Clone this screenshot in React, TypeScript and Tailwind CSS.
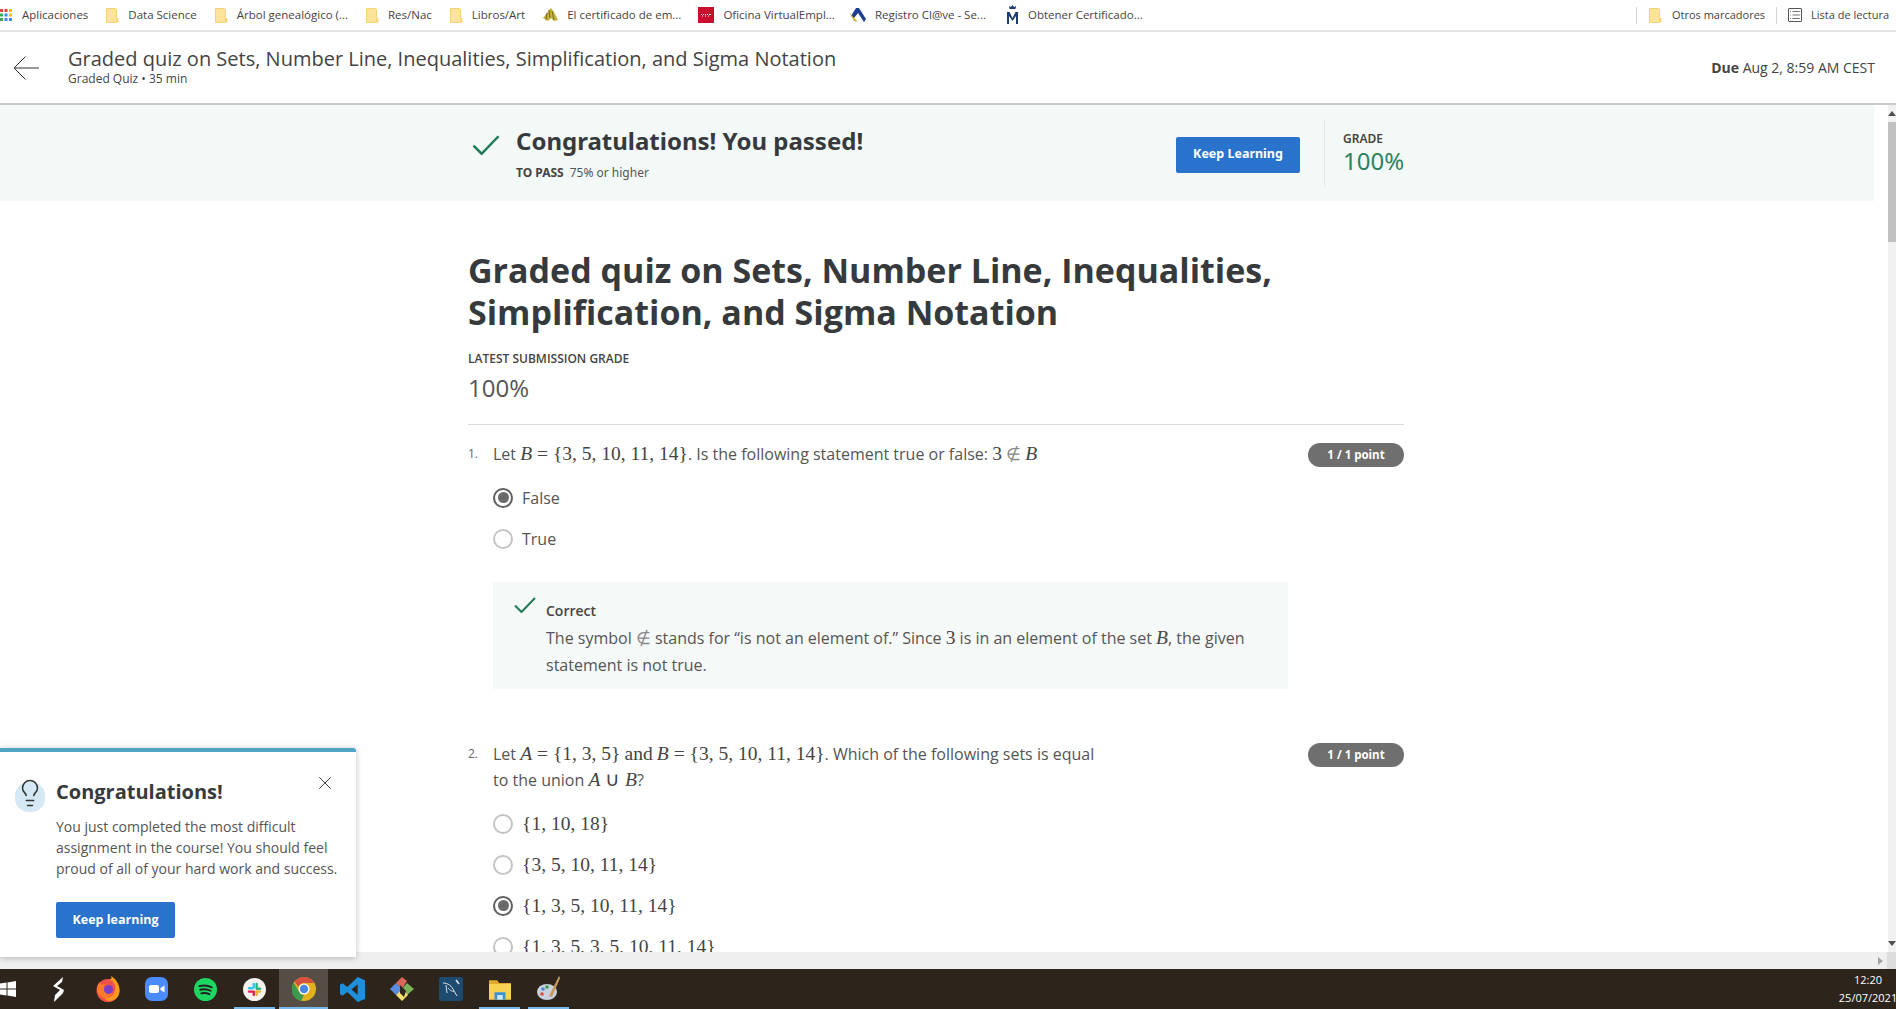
import type { ReactNode } from 'react';
import { Lightbulb, X, List } from 'lucide-react';

function M({ children }: { children: ReactNode }) {
  return <span className="font-['Liberation_Serif',serif] text-[19.500px] text-[#444]">{children}</span>;
}

function V({ children }: { children: ReactNode }) {
  return <i className="font-['Liberation_Serif',serif] text-[19.500px]">{children}</i>;
}

function NotIn() {
  return <span className="font-['Liberation_Serif',serif] text-[17px] text-[#8a8a8a]">∉</span>;
}

function Tick({ w, h, width }: { w: number; h: number; width: number }) {
  return (
    <svg width={w} height={h} viewBox="0 0 22 16" className="shrink-0 text-[#1f7a55]">
      <path d="M1 8.500 7.500 15 21 1" fill="none" stroke="currentColor" strokeWidth={width} />
    </svg>
  );
}

function Folder() {
  return (
    <svg width="13" height="15" viewBox="0 0 13 15" className="shrink-0">
      <path d="M.5.500h9l1 1v13h-10z" fill="#fde49a" stroke="#f3d27a" strokeWidth="1" />
      <path d="M10.500 10h2v4.500h-2z" fill="#f6d67e" />
    </svg>
  );
}

function Bookmark({ icon, label }: { icon: ReactNode; label: string }) {
  return (
    <div className="flex items-center gap-[9px]">
      {icon}
      <span className="text-[11.500px] text-[#444] whitespace-nowrap">{label}</span>
    </div>
  );
}

function BookmarksBar() {
  return (
    <div className="h-[32px] shrink-0 border-b-[2px] border-[#e2e4e6] flex items-center justify-between font-['Open_Sans',sans-serif] bg-white">
      <div className="flex items-center">
        <svg width="12" height="12" viewBox="0 0 12 12" className="shrink-0">
          <rect x="0" y="0" width="3" height="3" fill="#e8453c" />
          <rect x="4.500" y="0" width="3" height="3" fill="#e8453c" />
          <rect x="9" y="0" width="3" height="3" fill="#fbbc05" />
          <rect x="0" y="4.500" width="3" height="3" fill="#34a853" />
          <rect x="4.500" y="4.500" width="3" height="3" fill="#4285f4" />
          <rect x="9" y="4.500" width="3" height="3" fill="#fbbc05" />
          <rect x="0" y="9" width="3" height="3" fill="#34a853" />
          <rect x="4.500" y="9" width="3" height="3" fill="#4285f4" />
          <rect x="9" y="9" width="3" height="3" fill="#4285f4" />
        </svg>
        <div className="flex items-center gap-[18px] ml-[10px]">
          <span className="text-[11.500px] text-[#444]">Aplicaciones</span>
          <Bookmark icon={<Folder />} label="Data Science" />
          <Bookmark icon={<Folder />} label="Árbol genealógico (..." />
          <Bookmark icon={<Folder />} label="Res/Nac" />
          <Bookmark icon={<Folder />} label="Libros/Art" />
          <div className="flex items-center gap-[17px]">
            <Bookmark
              icon={
                <svg width="15" height="14" viewBox="0 0 15 14">
                  <path d="M0 10 6 2l2-2 3 4 4 8-4 1-3-3-3 3z" fill="#c9b13a" />
                  <path d="M6 2l1 8M9 3l2 9M4 5 3 12" stroke="#6b6b2c" strokeWidth="1" />
                </svg>
              }
              label="El certificado de em..."
            />
            <Bookmark
              icon={
                <svg width="16" height="16" viewBox="0 0 16 16">
                  <rect width="16" height="16" fill="#c8102e" />
                  <path d="M3 7.500h1M5 7.500h1M7 7.500h1M9 7.500h1M11 7.500h2M4 9h1M7 9h1M10 9h1" stroke="#fff" strokeWidth="1" />
                </svg>
              }
              label="Oficina VirtualEmpl..."
            />
            <div className="-ml-[3px]">
              <Bookmark
                icon={
                  <svg width="17" height="16" viewBox="0 0 17 16">
                    <path d="M2 9 7 1h3l7 11-2 3-6-9-4 5z" fill="#1c3f8f" />
                    <path d="M0 5l6 7 3 3-4-1z" fill="#d8a92f" />
                  </svg>
                }
                label="Registro Cl@ve - Se..."
              />
            </div>
            <div className="ml-[3px]">
              <Bookmark
                icon={
                  <svg width="13" height="20" viewBox="0 0 13 20">
                    <path d="M3.500 4 3 1l2 1 1.500-2L8 2l2-1-.5 3z" fill="#1f3c73" />
                    <path d="M1 19V7h2.500L6.500 13 9.500 7H12v12h-2v-8l-3.500 5L3 11v8z" fill="#1f3c73" />
                  </svg>
                }
                label="Obtener Certificado..."
              />
            </div>
          </div>
        </div>
      </div>
      <div className="flex items-center pr-[7px]">
        <div className="w-px h-[17px] bg-[#d5d5d5] mr-[12px]" />
        <div className="flex items-center gap-[10px]">
          <Folder />
          <span className="text-[11px] text-[#444] whitespace-nowrap">Otros marcadores</span>
        </div>
        <div className="w-px h-[17px] bg-[#d5d5d5] ml-[11px] mr-[11px]" />
        <div className="flex items-center gap-[9px]">
          <List size={14} strokeWidth={1.500} className="text-[#444] border border-[#555] rounded-[1px]" />
          <span className="text-[11px] text-[#444] whitespace-nowrap">Lista de lectura</span>
        </div>
      </div>
    </div>
  );
}

function QuizHeader() {
  return (
    <div className="h-[73px] shrink-0 border-b-[2px] border-[#c9c9c9] flex items-center justify-between bg-white pl-[13px] pr-[21px] font-['Open_Sans',sans-serif]">
      <div className="flex items-center gap-[29px]">
        <svg width="26" height="24" viewBox="0 0 26 24" className="text-[#333] shrink-0">
          <path d="M12.500 .500 1 12l11.500 11.500M1 12h25" fill="none" stroke="currentColor" strokeWidth="1" />
        </svg>
        <div className="-mt-[2px]">
          <div className="text-[20px] leading-[24px] text-[#444]">
            Graded quiz on Sets, Number Line, Inequalities, Simplification, and Sigma Notation
          </div>
          <div className="text-[12px] leading-[16px] text-[#444]">Graded Quiz • 35 min</div>
        </div>
      </div>
      <div className="text-[14px] text-[#444]">
        <span className="font-bold">Due</span> Aug 2, 8:59 AM CEST
      </div>
    </div>
  );
}

function Banner() {
  return (
    <div className="h-[96px] w-[1874px] bg-[#f3f9f7] flex items-center pl-[472px] shrink-0">
      <div className="w-[828px] flex justify-between items-center">
        <div className="flex gap-[16px] -mt-[1px]">
          <div className="mt-[10px]">
            <Tick w={28} h={20} width={2} />
          </div>
          <div>
            <div className="text-[24px] leading-[32px] font-bold text-[#373a3c]">Congratulations! You passed!</div>
            <div className="text-[12px] leading-[16px] mt-[8px] text-[#555]">
              <span className="font-bold mr-[6px] text-[#444]">TO PASS</span>75% or higher
            </div>
          </div>
        </div>
        <button type="button" className="w-[124px] h-[36px] mt-[3px] bg-[#2a73cc] rounded-[2px] text-white text-[12.500px] font-bold">
          Keep Learning
        </button>
      </div>
      <div className="w-px h-[68px] bg-[#e3e8e6] ml-[24px]" />
      <div className="ml-[18px]">
        <div className="text-[12px] leading-[16px] font-semibold text-[#444]">GRADE</div>
        <div className="text-[24px] leading-[28px] text-[#2e8160]">100%</div>
      </div>
    </div>
  );
}

function Radio({ on, children }: { on?: boolean; children: ReactNode }) {
  return (
    <div className="h-[41px] flex items-center gap-[9px]">
      {on ? (
        <span className="w-[20px] h-[20px] rounded-full border-[2px] border-[#5f5f5f] flex items-center justify-center">
          <span className="w-[11px] h-[11px] rounded-full bg-[#6a6a6a]" />
        </span>
      ) : (
        <span className="w-[20px] h-[20px] rounded-full border-[2px] border-[#c4c4c4]" />
      )}
      <span className="text-[16px] text-[#555]">{children}</span>
    </div>
  );
}

function Pill() {
  return (
    <div className="absolute right-0 top-[2px] w-[96px] h-[24px] rounded-full bg-[#6f6f6f] text-white text-[11.500px] font-bold flex items-center justify-center">
      1 / 1 point
    </div>
  );
}

function QuizBody() {
  return (
    <div className="pl-[468px] w-[1404px] font-['Open_Sans',sans-serif] text-[#444]">
      <h1 className="text-[34px] leading-[42px] font-bold text-[#373a3c] mt-[48px]">
        Graded quiz on Sets, Number Line, Inequalities,
        <br />
        Simplification, and Sigma Notation
      </h1>
      <div className="text-[12px] leading-[16px] font-semibold text-[#444] mt-[18px]">LATEST SUBMISSION GRADE</div>
      <div className="text-[24px] leading-[32px] text-[#555] mt-[5px]">100%</div>
      <div className="h-px bg-[#dcdcdc] mt-[20px]" />

      <div className="relative mt-[16px] pl-[25px]">
        <Pill />
        <span className="absolute left-0 top-0 text-[12px] leading-[26px] text-[#666]">1.</span>
        <div className="text-[16px] leading-[26px] text-[#555]">
          Let <M><V>B</V> = {'{'}3, 5, 10, 11, 14{'}'}</M>. Is the following statement true or false: <M>3</M> <NotIn /> <M><V>B</V></M>
        </div>
        <div className="mt-[9px]">
          <Radio on>False</Radio>
          <Radio>True</Radio>
        </div>
        <div className="mt-[23px] w-[795px] h-[107px] bg-[#f5f9f8] flex pl-[21px] pt-[17px] gap-[10px]">
          <div className="-mt-[2px]">
            <Tick w={22} h={16} width={2} />
          </div>
          <div className="text-[16px] text-[#555]">
            <div className="text-[14px] leading-[24px] font-semibold text-[#444]">Correct</div>
            <div className="leading-[26px] mt-[2px]">
              The symbol <NotIn /> stands for “is not an element of.” Since <M>3</M> is in an element of the set <M><V>B</V></M>, the given
              <br />
              statement is not true.
            </div>
          </div>
        </div>
      </div>

      <div className="relative mt-[52px] pl-[25px]">
        <Pill />
        <span className="absolute left-0 top-0 text-[12px] leading-[26px] text-[#666]">2.</span>
        <div className="text-[16px] leading-[26px] text-[#555]">
          Let <M><V>A</V> = {'{'}1, 3, 5{'}'}</M> <M>and</M> <M><V>B</V> = {'{'}3, 5, 10, 11, 14{'}'}</M>. Which of the following sets is equal
          <br />
          to the union <M><V>A</V> ∪ <V>B</V></M>?
        </div>
        <div className="mt-[10px]">
          <Radio><M>{'{'}1, 10, 18{'}'}</M></Radio>
          <Radio><M>{'{'}3, 5, 10, 11, 14{'}'}</M></Radio>
          <Radio on><M>{'{'}1, 3, 5, 10, 11, 14{'}'}</M></Radio>
          <Radio><M>{'{'}1, 3, 5, 3, 5, 10, 11, 14{'}'}</M></Radio>
        </div>
      </div>
    </div>
  );
}

function Toast() {
  return (
    <div className="absolute left-0 top-[748px] w-[356px] h-[209px] bg-white border-t-[4px] border-[#4ea5c6] rounded-tr-[3px] shadow-[0_1px_6px_rgba(0,0,0,0.25)] font-['Open_Sans',sans-serif] pl-[56px] pt-[26px] z-10">
      <div className="absolute left-[15px] top-[30px] w-[30px] h-[30px] bg-[#d4e9f3] rounded-[45%]" />
      <Lightbulb size={30} strokeWidth={1.200} className="absolute left-[15px] top-[26px] text-[#333]" />
      <X size={22} strokeWidth={1} className="absolute left-[314px] top-[20px] text-[#333]" />
      <div className="text-[20px] leading-[28px] font-bold text-[#373a3c]">Congratulations!</div>
      <div className="text-[14px] leading-[21px] text-[#555] mt-[10px] whitespace-nowrap">
        You just completed the most difficult
        <br />
        assignment in the course! You should feel
        <br />
        proud of all of your hard work and success.
      </div>
      <button type="button" className="mt-[23px] w-[119px] h-[36px] bg-[#2a73cc] rounded-[2px] text-white text-[12.500px] font-bold">
        Keep learning
      </button>
    </div>
  );
}

function TaskIcon({ active, bar, children }: { active?: boolean; bar?: boolean; children: ReactNode }) {
  return (
    <div className={active ? 'relative w-[49px] h-[40px] flex items-center justify-center bg-[#564e46]' : 'relative w-[49px] h-[40px] flex items-center justify-center'}>
      {children}
      {bar && <div className={active ? 'absolute left-0 right-0 bottom-0 h-[2px] bg-[#76b9ed]' : 'absolute left-[4px] right-[4px] bottom-0 h-[2px] bg-[#76b9ed]'} />}
    </div>
  );
}

function Taskbar() {
  return (
    <div className="h-[40px] shrink-0 bg-[#2d241c] flex items-center justify-between text-white font-['Open_Sans',sans-serif]">
      <div className="flex items-center">
        <svg width="16" height="16" viewBox="0 0 16 16" className="mr-[18px]">
          <path d="M0 2.500 6.500 1.600V7.500H0zM7.500 1.500 16 0v7.500H7.500zM0 8.500h6.500v5.900L0 13.500zM7.500 8.500H16V16l-8.500-1.500z" fill="#fff" />
        </svg>
        <TaskIcon>
          <svg width="13" height="25" viewBox="0 0 13 25">
            <path d="M11 0 1 9l7 4-5 5-1 7 9-9 1-3-7-4 5-4z" fill="#fff" />
          </svg>
        </TaskIcon>
        <TaskIcon>
          <svg width="24" height="26" viewBox="0 0 24 26">
            <circle cx="12" cy="14.500" r="11.500" fill="#f0504a" />
            <path d="M23.500 14.500C23.500 8 20 3 15 0c1 2 0 4-3 4 6 0 8 5 7 10-1 6-6 9-11 8 2 2 4 3 5 3 6 0 10.500-4.500 10.500-10.500z" fill="#ff9a1f" />
            <path d="M1 13c0-3 1-5 3-7l1 3c2-1 4-1 6 0-3 0-4 2-3 5s4 4 7 3-1 6-7 5c-4-1-7-5-7-9z" fill="#ff7a2a" />
            <circle cx="12.500" cy="13.500" r="4.500" fill="#7c3fc4" />
          </svg>
        </TaskIcon>
        <TaskIcon>
          <svg width="23" height="24" viewBox="0 0 23 24">
            <rect width="23" height="24" rx="7" fill="#4a8cff" />
            <rect x="4" y="8" width="10" height="8" rx="2" fill="#fff" />
            <path d="m15.500 11 4-2.500v7l-4-2.500z" fill="#fff" />
          </svg>
        </TaskIcon>
        <TaskIcon>
          <svg width="23" height="23" viewBox="0 0 24 24">
            <circle cx="12" cy="12" r="12" fill="#1ed760" />
            <path d="M5.500 8.500c4.500-1.200 9-.8 13 1.200M6.500 12.300c3.800-1 7.500-.6 10.800 1M7.500 16c3-.7 6-.4 8.500.9" stroke="#222" strokeWidth="2" strokeLinecap="round" fill="none" />
          </svg>
        </TaskIcon>
        <TaskIcon bar>
          <svg width="23" height="23" viewBox="0 0 24 24">
            <circle cx="12" cy="12" r="12" fill="#f4f1ee" />
            <rect x="10" y="5" width="2.500" height="6" rx="1.200" fill="#36c5f0" />
            <rect x="5" y="9.500" width="6" height="2.500" rx="1.200" fill="#36c5f0" />
            <rect x="13" y="5" width="2.500" height="6" rx="1.200" fill="#2eb67d" />
            <rect x="13" y="10" width="6" height="2.500" rx="1.200" fill="#2eb67d" />
            <rect x="13" y="13" width="2.500" height="6" rx="1.200" fill="#ecb22e" />
            <rect x="13" y="13" width="6" height="2.500" rx="1.200" fill="#ecb22e" />
            <rect x="10" y="13" width="2.500" height="6" rx="1.200" fill="#e01e5a" />
            <rect x="5" y="13" width="6" height="2.500" rx="1.200" fill="#e01e5a" />
          </svg>
        </TaskIcon>
        <TaskIcon active bar>
          <svg width="24" height="24" viewBox="0 0 24 24">
            <circle cx="12" cy="12" r="12" fill="#e2b11f" />
            <path d="M12 0a12 12 0 0 1 10.400 6H12a6 6 0 0 0-5.600 3.800L2.500 4.800A12 12 0 0 1 12 0z" fill="#d9503f" />
            <path d="M1.600 5.500 7 14.500a6 6 0 0 0 5 3.500L9 24A12 12 0 0 1 1.600 5.500z" fill="#3d9a4c" />
            <circle cx="12" cy="12" r="5.500" fill="#fff" />
            <circle cx="12" cy="12" r="4.200" fill="#4a87e0" />
          </svg>
        </TaskIcon>
        <TaskIcon>
          <svg width="25" height="25" viewBox="0 0 24 24">
            <path d="M17 0 24 3v18l-7 3L7 14.500 2.500 18 0 16.500V7.500L2.500 6 7 9.500zM17 7l-6 5 6 5z" fill="#1f8fd8" />
          </svg>
        </TaskIcon>
        <TaskIcon>
          <svg width="24" height="24" viewBox="0 0 24 24">
            <path d="M6 6 0 12l6 6 6-6z" fill="#5b8ce0" />
            <path d="M6 6 12 0l5 4-5 8z" fill="#d9685a" />
            <path d="M17 6l7 6-7 6-5-6z" fill="#7bb35a" />
            <path d="M6 18l6-6 6 6-6 6z" fill="#f3dd75" />
            <path d="M10 8l6 6-2 6-4-4z" fill="#2d241c" />
          </svg>
        </TaskIcon>
        <TaskIcon>
          <svg width="24" height="24" viewBox="0 0 24 24">
            <rect width="24" height="24" rx="2" fill="#1f4a70" />
            <path d="M4 6c5 0 9 3 11 8l3 5M15 14c-2 1-4-1-6-3M7 8l1 8" stroke="#d8e4ec" strokeWidth="1" fill="none" />
            <path d="m17 3 3 4" stroke="#d8e4ec" strokeWidth="1.500" />
          </svg>
        </TaskIcon>
        <TaskIcon bar>
          <svg width="22" height="21" viewBox="0 0 24 22">
            <path d="M0 1h9l2 3h13v18H0z" fill="#e0a92e" />
            <rect y="5" width="24" height="17" fill="#f7d154" />
            <rect x="6" y="14" width="12" height="8" fill="#3b93d6" />
            <rect x="9" y="17" width="6" height="5" fill="#cfe6f7" />
          </svg>
        </TaskIcon>
        <TaskIcon bar>
          <svg width="24" height="26" viewBox="0 0 24 26">
            <ellipse cx="10" cy="16" rx="10" ry="8" fill="#c8d2dc" />
            <circle cx="6" cy="13" r="1.800" fill="#4a87e0" />
            <circle cx="10" cy="11" r="1.800" fill="#3d9a4c" />
            <circle cx="5" cy="18" r="1.800" fill="#d9503f" />
            <path d="M22 0 12 20l3 1L23 2z" fill="#c79a5b" />
          </svg>
        </TaskIcon>
      </div>
      <div className="text-[11px] leading-[18px] text-center text-white whitespace-nowrap w-[60px] mr-[-2px]">
        <div>12:20</div>
        <div>25/07/2021</div>
      </div>
    </div>
  );
}

export default function App() {
  return (
    <div className="relative w-[1896px] h-[1009px] overflow-hidden flex flex-col bg-white">
      <BookmarksBar />
      <QuizHeader />
      <div className="flex-1 min-h-0 flex">
        <div className="flex-1 min-w-0 overflow-hidden">
          <Banner />
          <QuizBody />
        </div>
        <div className="w-[8px] shrink-0 bg-[#f1f1f1] flex flex-col items-center">
          <div className="h-[17px] flex items-center justify-center">
            <div className="w-0 h-0 border-x-[4px] border-x-transparent border-b-[5px] border-b-[#505050]" />
          </div>
          <div className="w-full h-[120px] bg-[#c1c1c1]" />
          <div className="flex-1" />
          <div className="h-[17px] flex items-center justify-center">
            <div className="w-0 h-0 border-x-[4px] border-x-transparent border-t-[5px] border-t-[#505050]" />
          </div>
        </div>
      </div>
      <div className="h-[17px] shrink-0 bg-[#efefef] flex justify-end items-center">
        <div className="w-0 h-0 border-y-[4px] border-y-transparent border-l-[5px] border-l-[#a3a3a3] mr-[4px]" />
        <div className="w-[9px] h-full bg-[#dcdcdc]" />
      </div>
      <Taskbar />
      <Toast />
    </div>
  );
}
